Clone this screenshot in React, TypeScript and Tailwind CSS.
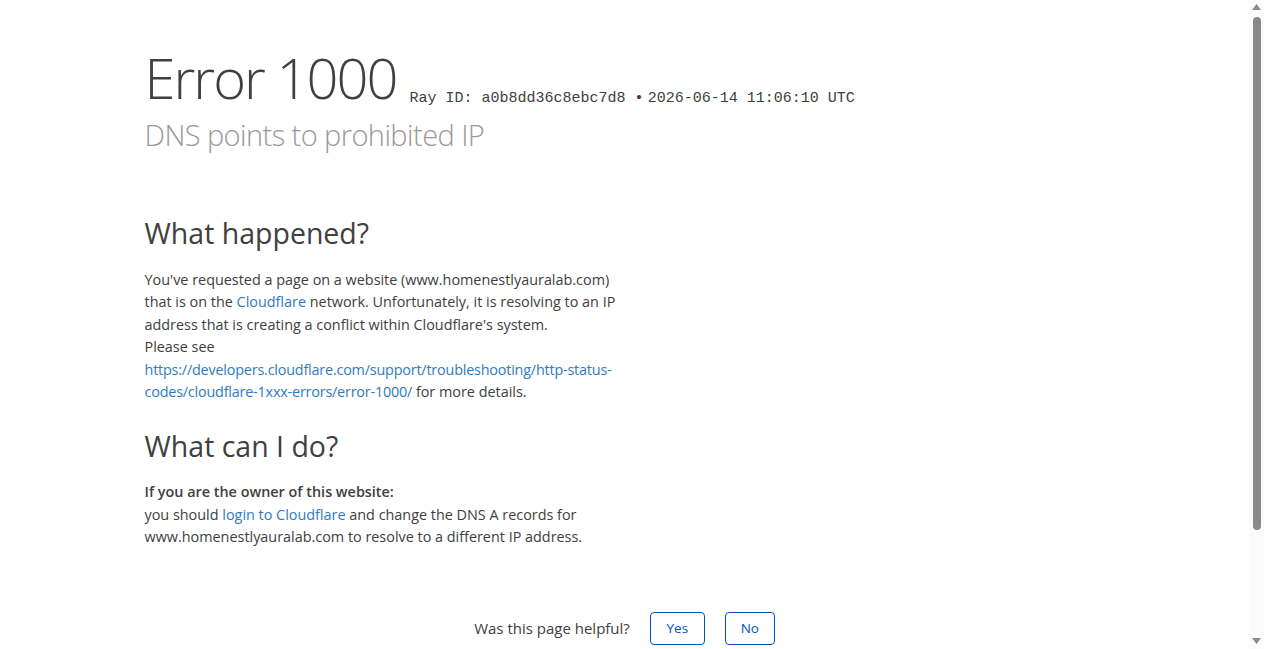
const sans = { fontFamily: '"Open Sans", "Noto Sans", sans-serif' };

function Scrollbar() {
  return (
    <div className="fixed top-0 right-0 w-[15px] h-screen bg-[#fbfbfb] flex flex-col items-center">
      <svg width="9" height="6" viewBox="0 0 9 6" className="mt-[4px]">
        <path d="M4.5 0L9 6H0z" fill="#8a8a8a" />
      </svg>
      <div className="mt-[7px] w-[8px] h-[513px] rounded-full bg-[#8a8a8a]" />
      <div className="flex-1" />
      <svg width="9" height="6" viewBox="0 0 9 6" className="mb-[5px]">
        <path d="M0 0H9L4.5 6z" fill="#8a8a8a" />
      </svg>
    </div>
  );
}

export default function App() {
  return (
    <div className="h-screen overflow-hidden bg-white text-[#404040] pr-[15px]" style={sans}>
      <div className="w-[960px] mx-auto">
        {/* Header */}
        <header className="pt-10 mb-[61px] antialiased">
          <h1 className="inline-block mr-[13px] font-light text-[56px] leading-[75px] text-[#404040] tracking-[-0.035em]">
            Error 1000
          </h1>
          <span className="relative top-[3px] inline-block font-['Liberation_Mono',monospace] text-[15px] text-[#404040]">
            Ray ID: a0b8dd36c8ebc7d8 &bull;
          </span>{" "}
          <span className="relative top-[3px] inline-block font-['Liberation_Mono',monospace] text-[15px] text-[#404040]">
            2026-06-14 11:06:10 UTC
          </span>
          <h2 className="text-[#999] leading-[39px] text-[29px] font-light tracking-[-0.02em]">
            DNS points to prohibited IP
          </h2>
        </header>

        {/* Content */}
        <section>
          <div className="w-1/2 text-[14.4px] leading-[22.5px]">
            <h2 className="text-[28.5px] leading-[37.5px] font-normal mb-4 text-[#404040]">
              What happened?
            </h2>
            <p>
              You've requested a page on a website (www.homenestlyauralab.com) that is on the{" "}
              <a href="#" className="text-[#2f7bbf]">Cloudflare</a> network. Unfortunately, it is
              resolving to an IP address that is creating a conflict within Cloudflare's system.
              <br />
              Please see{" "}
              <a href="#" className="text-[#2f7bbf] tracking-[-0.2px]">
                https://developers.cloudflare.com/support/troubleshooting/http-status-codes/cloudflare-1xxx-errors/error-1000/
              </a>{" "}
              for more details.
            </p>
          </div>
          <div className="w-1/2 mt-6 text-[14.4px] leading-[22.5px]">
            <h2 className="text-[28.5px] leading-[37.5px] font-normal mb-4 text-[#404040]">
              What can I do?
            </h2>
            <p className="font-semibold">If you are the owner of this website:</p>
            <p>
              you should <a href="#" className="text-[#2f7bbf]">login to Cloudflare</a> and change
              the DNS A records for www.homenestlyauralab.com to resolve to a different IP address.
            </p>
          </div>
        </section>
      </div>

      {/* Feedback */}
      <div className="flex items-center justify-center gap-5 pt-[63px] text-[15px]">
        <span>Was this page helpful?</span>
        <button className="w-[55px] h-[33px] border border-[#0051c3] rounded text-[#0051c3] text-[13.5px]">
          Yes
        </button>
        <button className="w-[50px] h-[33px] border border-[#0051c3] rounded text-[#0051c3] text-[13.5px]">
          No
        </button>
      </div>

      <Scrollbar />
    </div>
  );
}
